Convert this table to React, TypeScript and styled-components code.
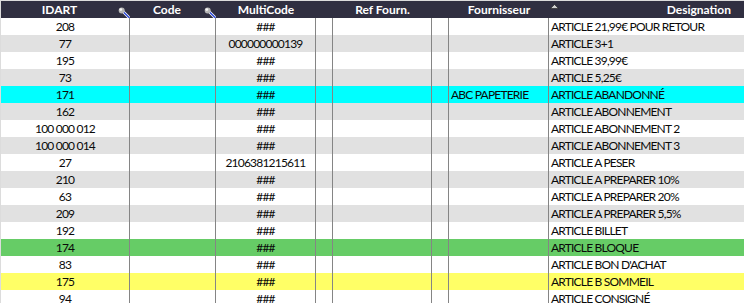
import styled, { createGlobalStyle } from "styled-components";

const GlobalStyle = createGlobalStyle`
  html, body {
    margin: 0;
    padding: 0;
    background: #ffffff;
    overflow: hidden;
  }
  body {
    font-family: Lato, "Liberation Sans", sans-serif;
  }
`;

type Align = "left" | "center" | "right";

interface Column {
  key: string;
  title: string;
  width?: number;
  align: Align;
  headAlign: Align;
  pin?: boolean;
  sorted?: boolean;
}

// widths include the 1px separator on the right
const columns: Column[] = [
  { key: "id", title: "IDART", width: 129, align: "center", headAlign: "center", pin: true },
  { key: "code", title: "Code", width: 86, align: "center", headAlign: "center", pin: true },
  { key: "multi", title: "MultiCode", width: 100, align: "center", headAlign: "center" },
  { key: "x1", title: "", width: 17, align: "center", headAlign: "center" },
  { key: "ref", title: "Ref Fourn.", width: 99, align: "left", headAlign: "center" },
  { key: "x2", title: "", width: 17, align: "center", headAlign: "center" },
  { key: "four", title: "Fournisseur", width: 100, align: "left", headAlign: "center" },
  { key: "desig", title: "Designation", align: "left", headAlign: "right", sorted: true },
];

type Tone = "plain" | "cyan" | "green" | "yellow";

interface Row {
  id: string;
  multi: string;
  four?: string;
  desig: string;
  tone?: Tone;
}

const rows: Row[] = [
  { id: "208", multi: "###", desig: "ARTICLE 21,99€ POUR RETOUR" },
  { id: "77", multi: "000000000139", desig: "ARTICLE 3+1" },
  { id: "195", multi: "###", desig: "ARTICLE 39,99€" },
  { id: "73", multi: "###", desig: "ARTICLE 5,25€" },
  { id: "171", multi: "###", four: "ABC PAPETERIE", desig: "ARTICLE ABANDONNÉ", tone: "cyan" },
  { id: "162", multi: "###", desig: "ARTICLE ABONNEMENT" },
  { id: "100 000 012", multi: "###", desig: "ARTICLE ABONNEMENT 2" },
  { id: "100 000 014", multi: "###", desig: "ARTICLE ABONNEMENT 3" },
  { id: "27", multi: "2106381215611", desig: "ARTICLE A PESER" },
  { id: "210", multi: "###", desig: "ARTICLE A PREPARER 10%" },
  { id: "63", multi: "###", desig: "ARTICLE A PREPARER 20%" },
  { id: "209", multi: "###", desig: "ARTICLE A PREPARER 5,5%" },
  { id: "192", multi: "###", desig: "ARTICLE BILLET" },
  { id: "174", multi: "###", desig: "ARTICLE BLOQUE", tone: "green" },
  { id: "83", multi: "###", desig: "ARTICLE BON D'ACHAT" },
  { id: "175", multi: "###", desig: "ARTICLE B SOMMEIL", tone: "yellow" },
  { id: "94", multi: "###", desig: "ARTICLE CONSIGNÉ" },
];

const toneColors: Record<Tone, string> = {
  plain: "transparent",
  cyan: "#00ffff",
  green: "#66cc66",
  yellow: "#ffff66",
};

const Grid = styled.div`
  width: 743px;
  border-left: 1px solid #dcdcdc;
  border-top: 1px solid #dcdcdc;
  background: #ffffff;
  font-size: 12px;
  color: #0a0a0a;
`;

const HeaderRow = styled.div`
  display: flex;
  height: 17px;
  background: #302f41;
  color: #ffffff;
  font-weight: 700;
`;

const HeadCell = styled.div<{ $width?: number; $align: Align }>`
  position: relative;
  flex: ${(p) => (p.$width ? `0 0 ${p.$width}px` : "1 1 auto")};
  display: flex;
  align-items: center;
  justify-content: ${(p) =>
    p.$align === "right" ? "flex-end" : p.$align === "left" ? "flex-start" : "center"};
  padding-right: ${(p) => (p.$align === "right" ? "13px" : "0")};
  box-sizing: border-box;
  line-height: 17px;
  white-space: nowrap;
`;

const HeadLabel = styled.span<{ $pin?: boolean }>`
  margin-right: ${(p) => (p.$pin ? "12px" : "0")};
`;

const PinIcon = styled.svg`
  position: absolute;
  right: 0;
  top: 5px;
`;

const SortArrow = styled.svg`
  position: absolute;
  left: 1px;
  top: 3px;
`;

const BodyRow = styled.div<{ $tone: Tone; $odd: boolean }>`
  display: flex;
  height: 17px;
  background: ${(p) =>
    p.$tone !== "plain" ? toneColors[p.$tone] : p.$odd ? "#e1e1e1" : "#ffffff"};
`;

const Cell = styled.div<{ $width?: number; $align: Align; $last?: boolean }>`
  flex: ${(p) => (p.$width ? `0 0 ${p.$width}px` : "1 1 auto")};
  box-sizing: border-box;
  border-right: ${(p) => (p.$last ? "none" : "1px solid #858585")};
  text-align: ${(p) => p.$align};
  padding-left: ${(p) => (p.$align === "left" ? "2px" : "0")};
  line-height: 17px;
  letter-spacing: -0.8px;
  white-space: nowrap;
  overflow: hidden;
`;

const Pin = () => (
  <PinIcon width="12" height="12" viewBox="0 0 12 12">
    <line x1="4.5" y1="5" x2="11.5" y2="12" stroke="#ffffff" strokeWidth="2.8" />
    <line x1="4.5" y1="5" x2="11.5" y2="12" stroke="#1f3fd8" strokeWidth="1.3" />
    <circle cx="3.7" cy="4.5" r="3" fill="#b5b5b5" />
    <circle cx="2.8" cy="3.6" r="1.4" fill="#f4f4f4" />
  </PinIcon>
);

const Arrow = () => (
  <SortArrow width="9" height="5" viewBox="0 0 9 5">
    <polygon points="4.5,0.5 8.5,4.5 0.5,4.5" fill="#cfcfcf" stroke="#1b1b1b" strokeWidth="0.6" />
  </SortArrow>
);

const cellValue = (row: Row, key: string) => {
  switch (key) {
    case "id":
      return row.id;
    case "multi":
      return row.multi;
    case "four":
      return row.four ?? "";
    case "desig":
      return row.desig;
    default:
      return "";
  }
};

export default function App() {
  return (
    <>
      <GlobalStyle />
      <Grid>
        <HeaderRow>
          {columns.map((c) => (
            <HeadCell key={c.key} $width={c.width} $align={c.headAlign}>
              {c.sorted && <Arrow />}
              <HeadLabel $pin={c.pin}>{c.title}</HeadLabel>
              {c.pin && <Pin />}
            </HeadCell>
          ))}
        </HeaderRow>
        {rows.map((r, i) => (
          <BodyRow key={r.id} $tone={r.tone ?? "plain"} $odd={i % 2 === 1}>
            {columns.map((c, ci) => (
              <Cell key={c.key} $width={c.width} $align={c.align} $last={ci === columns.length - 1}>
                {cellValue(r, c.key)}
              </Cell>
            ))}
          </BodyRow>
        ))}
      </Grid>
    </>
  );
}
